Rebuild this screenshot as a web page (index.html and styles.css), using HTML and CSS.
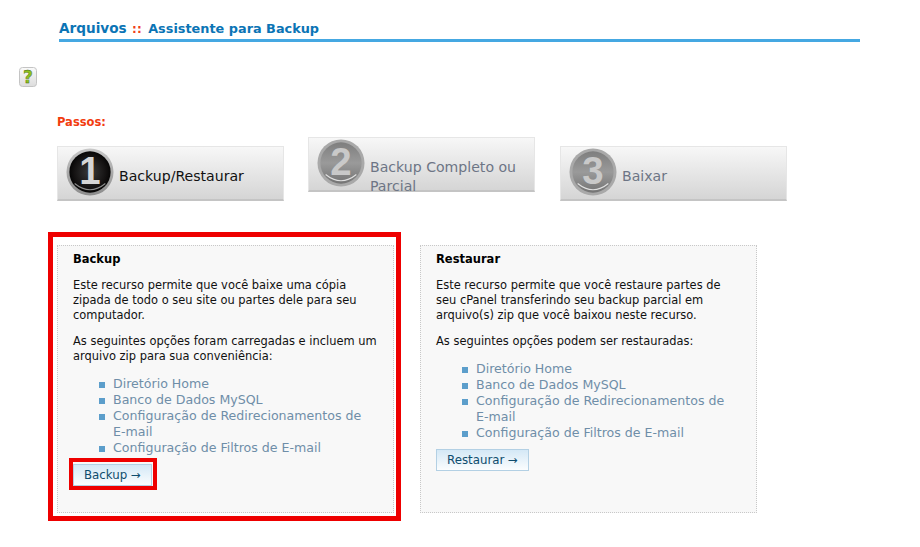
FILE: index.html
```html
<!DOCTYPE html>
<html lang="en">
<head>
	<meta charset="UTF-8">
	<title>Assistente para Backup</title>
	<link rel="stylesheet" href="styles.css">
</head>
<body>
	<div id="page">
		<h1 class="title"><span class="title-main">Arquivos</span> <span class="title-sep">::</span> <span class="title-sub">Assistente para Backup</span></h1>
		<div class="help">
			<svg width="18" height="20" viewBox="0 0 18 20">
				<defs>
					<linearGradient id="helpbg" x1="0" y1="0" x2="0" y2="1">
						<stop offset="0" stop-color="#fafafa"/>
						<stop offset="1" stop-color="#dcdcdc"/>
					</linearGradient>
				</defs>
				<rect x="0.5" y="0.5" width="17" height="19" rx="3" fill="url(#helpbg)" stroke="#c4c4c4"/>
				<text x="9" y="16" text-anchor="middle" class="help-mark">?</text>
			</svg>
		</div>
		<div class="steps-label">Passos:</div>
		<div class="steps">
			<div class="step step-low step-on">
				<svg class="badge" width="48" height="48" viewBox="0 0 50 50"><use href="#disc-dark"/><text x="25" y="38" text-anchor="middle" class="num num-on">1</text></svg>
				<span class="step-text">Backup/Restaurar</span>
			</div>
			<div class="step">
				<svg class="badge" width="48" height="48" viewBox="0 0 50 50"><use href="#disc-grey"/><text x="25" y="38" text-anchor="middle" class="num">2</text></svg>
				<span class="step-text">Backup Completo ou Parcial</span>
			</div>
			<div class="step step-low step-three">
				<svg class="badge" width="48" height="48" viewBox="0 0 50 50"><use href="#disc-grey"/><text x="25" y="38" text-anchor="middle" class="num">3</text></svg>
				<span class="step-text">Baixar</span>
			</div>
		</div>
		<div class="panels">
			<div class="panel">
				<h2>Backup</h2>
				<p>Este recurso permite que você baixe uma cópia zipada de todo o seu site ou partes dele para seu computador.</p>
				<p>As seguintes opções foram carregadas e incluem um arquivo zip para sua conveniência:</p>
				<ul>
					<li>Diretório Home</li>
					<li>Banco de Dados MySQL</li>
					<li>Configuração de Redirecionamentos de <span class="nobreak">E-mail</span></li>
					<li>Configuração de Filtros de E-mail</li>
				</ul>
				<a class="btn">Backup →</a>
				<div class="mark mark-btn"></div>
				<div class="mark mark-panel"></div>
			</div>
			<div class="panel">
				<h2>Restaurar</h2>
				<p>Este recurso permite que você restaure partes de seu cPanel transferindo seu backup parcial em arquivo(s) zip que você baixou neste recurso.</p>
				<p>As seguintes opções podem ser restauradas:</p>
				<ul>
					<li>Diretório Home</li>
					<li>Banco de Dados MySQL</li>
					<li>Configuração de Redirecionamentos de <span class="nobreak">E-mail</span></li>
					<li>Configuração de Filtros de E-mail</li>
				</ul>
				<a class="btn">Restaurar →</a>
			</div>
		</div>
	</div>
	<svg class="defs" width="0" height="0">
		<defs>
			<linearGradient id="ring" x1="0" y1="0" x2="0" y2="1">
				<stop offset="0" stop-color="#c8c8c8"/>
				<stop offset="1" stop-color="#8c8c8c"/>
			</linearGradient>
			<radialGradient id="dark" cx="0.5" cy="0.5" r="0.55">
				<stop offset="0" stop-color="#3a3a3a"/>
				<stop offset="0.7" stop-color="#141212"/>
				<stop offset="1" stop-color="#000"/>
			</radialGradient>
			<linearGradient id="grey" x1="0" y1="0" x2="0" y2="1">
				<stop offset="0" stop-color="#7e7e7e"/>
				<stop offset="0.5" stop-color="#9a9a9a"/>
				<stop offset="1" stop-color="#747474"/>
			</linearGradient>
			<g id="disc-dark">
				<circle cx="25" cy="25" r="24.5" fill="url(#ring)"/>
				<circle cx="25" cy="25" r="21.5" fill="url(#dark)"/>
				<path d="M9 37Q25 50 41 37" fill="none" stroke="#8a8a8a" stroke-width="1.2"/>
			</g>
			<g id="disc-grey">
				<circle cx="25" cy="25" r="24.5" fill="#a9a9a9"/>
				<circle cx="25" cy="25" r="21.5" fill="url(#grey)"/>
				<path d="M9 37Q25 50 41 37" fill="none" stroke="#e0e0e0" stroke-width="1.2"/>
			</g>
		</defs>
	</svg>
</body>
</html>
```

FILE: styles.css
```css
html, body {
	margin: 0;
	padding: 0;
	background: #fff;
}
body {
	font-family: "DejaVu Sans", Verdana, sans-serif;
	font-size: 11.45px;
	color: #111;
}
#page {
	width: 920px;
	height: 547px;
	overflow: hidden;
}
.title {
	margin: 19px 60px 0 59px;
	padding-bottom: 2px;
	height: 18px;
	border-bottom: 3px solid #45a8e2;
	font-size: 12.85px;
	font-weight: bold;
	line-height: 18px;
	color: #0b74b5;
	white-space: nowrap;
}
.title-main {
	font-size: 13.6px;
}
.title-sep {
	color: #f0401a;
	font-size: 12px;
	margin: 0 2px 0 1px;
}
.help {
	margin: 25px 0 0 19px;
	height: 20px;
}
.help svg {
	display: block;
}
.help-mark {
	font-family: "DejaVu Sans", sans-serif;
	font-size: 17px;
	font-weight: bold;
	fill: #8ec21f;
	stroke: #3d5a0c;
	stroke-width: 0.4;
}
.steps-label {
	margin: 28px 0 0 57px;
	font-size: 11.5px;
	font-weight: bold;
	line-height: 14px;
	color: #f23c0f;
}
.steps {
	display: flex;
	align-items: flex-start;
	gap: 24px;
	margin: 8px 0 0 57px;
}
.step {
	box-sizing: border-box;
	width: 227px;
	height: 55px;
	display: flex;
	align-items: flex-start;
	padding: 1px 0 0 8px;
	background: linear-gradient(#f7f7f7, #d5d5d5);
	border: 1px solid #e6e6e6;
	border-bottom: 2px solid #c4c4c4;
	color: #6d7585;
	font-size: 14.1px;
	line-height: 19px;
}
.step-low {
	margin-top: 9px;
}
.step-on {
	color: #111;
}
.step-three {
	margin-left: 1px;
}
.badge {
	flex: none;
	margin-right: 5px;
	overflow: visible;
}
.step-text {
	padding-top: 19px;
}
.num {
	font-family: "Liberation Sans", sans-serif;
	font-size: 40px;
	font-weight: bold;
	fill: #c9c9c9;
}
.num-on {
	fill: #d6d6d6;
}
.panels {
	display: flex;
	gap: 26px;
	margin: 44px 0 0 57px;
}
.panel {
	position: relative;
	box-sizing: border-box;
	width: 337px;
	height: 268px;
	padding: 6px 15px 0;
	background: #f8f8f8;
	border: 1px dotted #c8c8c8;
}
.panel h2 {
	margin: 0;
	font-size: 11.5px;
	line-height: 14px;
	color: #000;
}
.panel p {
	margin: 12px 0 0;
	line-height: 15px;
	color: #111;
}
.panel p + p {
	margin-top: 11px;
}
.panel ul {
	margin: 12px 0 0;
	padding: 0 0 0 40px;
	list-style: none;
}
.panel li {
	position: relative;
	font-size: 12.6px;
	line-height: 16px;
	color: #6f8ea8;
}
.panel li:before {
	content: "";
	position: absolute;
	left: -14px;
	top: 6px;
	width: 6px;
	height: 6px;
	background: #5c9ecb;
}
.nobreak {
	white-space: nowrap;
}
.btn {
	display: inline-block;
	margin-top: 8px;
	padding: 0 10px;
	height: 20px;
	font-size: 11.8px;
	line-height: 20px;
	background: linear-gradient(#d4e8f6, #fbfdfe);
	border: 1px solid #b3d0e4;
	color: #0e4d6e;
}
.mark {
	position: absolute;
	border: solid #ee0000;
	box-sizing: border-box;
}
.mark-panel {
	left: -10px;
	top: -14px;
	width: 353px;
	height: 289px;
	border-width: 5px;
}
.mark-btn {
	left: 11px;
	top: 212px;
	width: 88px;
	height: 32px;
	border-width: 4px;
}
.defs {
	position: absolute;
}
```
